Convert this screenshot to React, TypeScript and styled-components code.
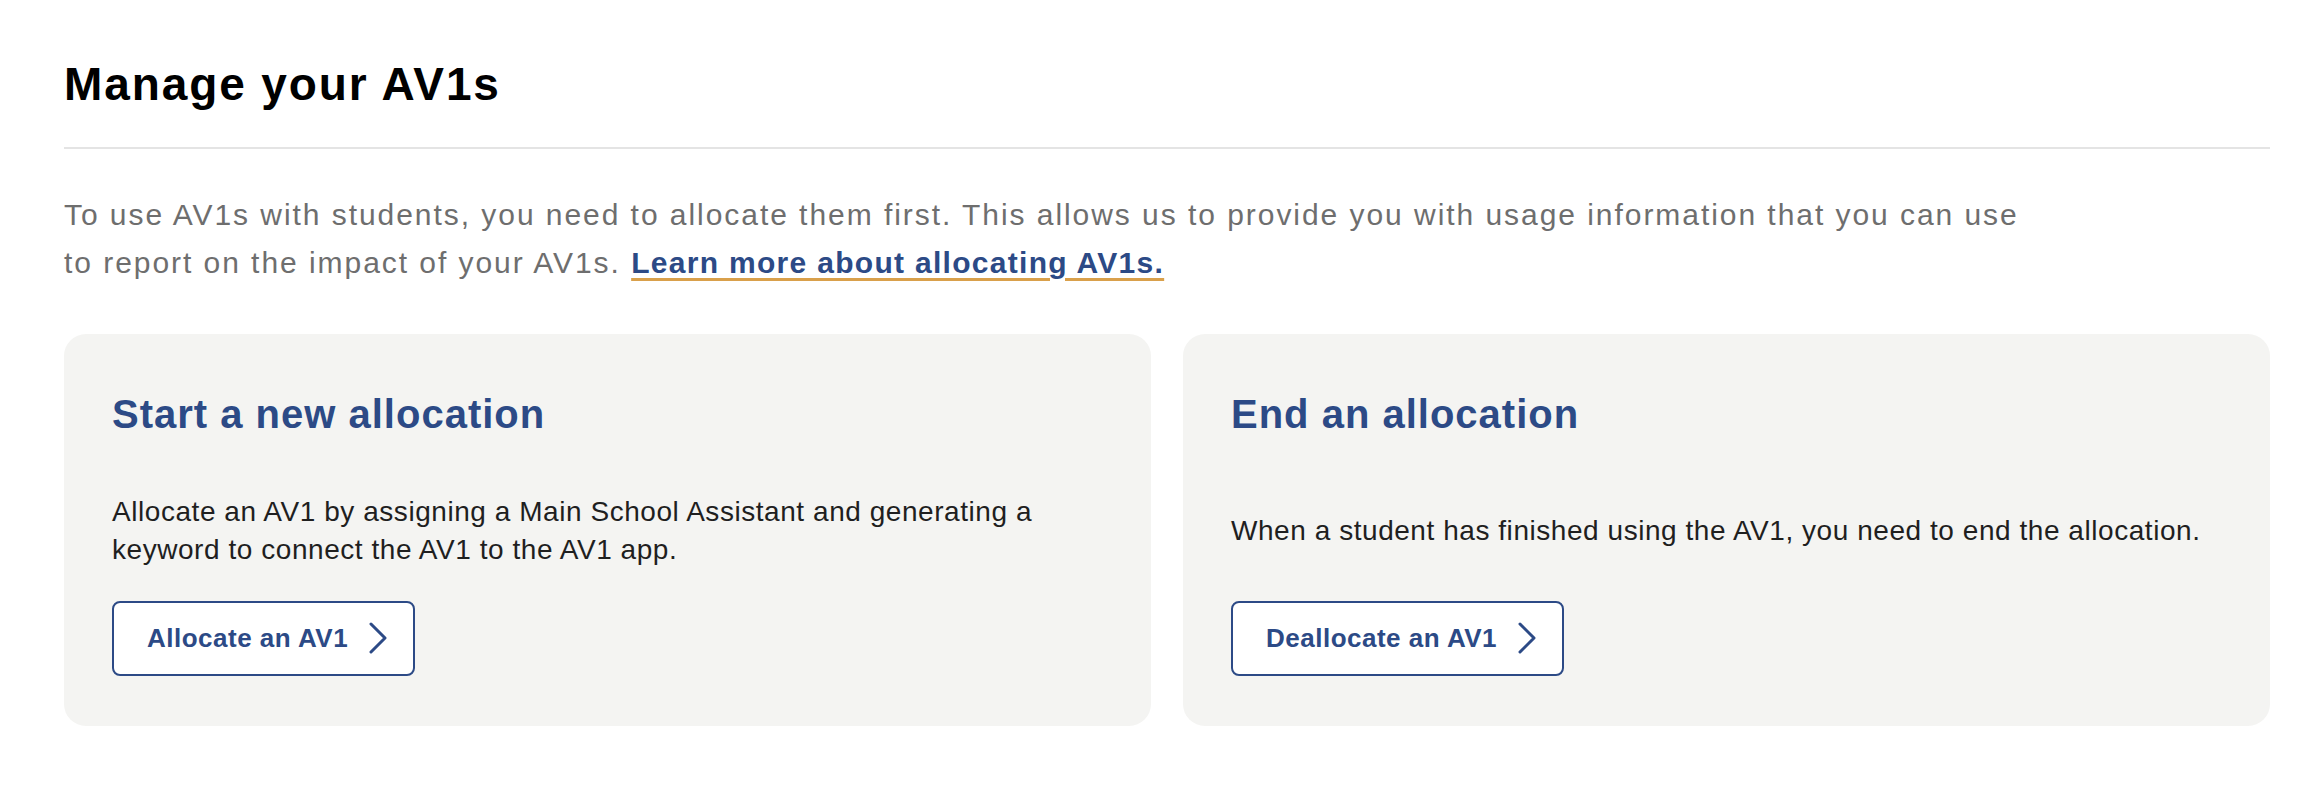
import styled, { createGlobalStyle } from 'styled-components';

const GlobalStyle = createGlobalStyle`
  * {
    box-sizing: border-box;
  }
  body {
    margin: 0;
    background: #ffffff;
    font-family: 'Liberation Sans', Arial, sans-serif;
  }
`;

const navy = '#2c4a86';

const actions = [
  {
    title: 'Start a new allocation',
    text: 'Allocate an AV1 by assigning a Main School Assistant and generating a keyword to connect the AV1 to the AV1 app.',
    button: 'Allocate an AV1',
  },
  {
    title: 'End an allocation',
    text: 'When a student has finished using the AV1, you need to end the allocation.',
    button: 'Deallocate an AV1',
  },
];

const Chevron = () => (
  <svg width="18" height="32" viewBox="0 0 18 32" fill="none">
    <polyline points="2,2 16,16 2,30" stroke={navy} strokeWidth="3" strokeLinecap="round" strokeLinejoin="round" />
  </svg>
);

const App = () => {
  return (
    <>
      <GlobalStyle />
      <Page>
        <PageTitle>Manage your AV1s</PageTitle>
        <Divider />
        <Intro>
          To use AV1s with students, you need to allocate them first. This allows us to provide you with usage
          information that you can use to report on the impact of your AV1s.{' '}
          <IntroLink href="#">Learn more about allocating AV1s.</IntroLink>
        </Intro>
        <CardGrid>
          {actions.map((a) => (
            <Card key={a.title}>
              <CardTitle>{a.title}</CardTitle>
              <CardBody>
                <p>{a.text}</p>
              </CardBody>
              <CardButton type="button">
                {a.button}
                <Chevron />
              </CardButton>
            </Card>
          ))}
        </CardGrid>
      </Page>
    </>
  );
};

const Page = styled.main`
  width: 2270px;
  padding: 58px 0 0 64px;
`;

const PageTitle = styled.h1`
  margin: 0;
  font-size: 46px;
  line-height: 1.15;
  font-weight: 700;
  letter-spacing: 1.9px;
  color: #000;
`;

const Divider = styled.hr`
  margin: 36px 0 0;
  border: none;
  height: 2px;
  background-color: #e4e4e4;
`;

const Intro = styled.p`
  margin: 42px 0 0;
  max-width: 1975px;
  font-size: 30px;
  line-height: 48px;
  letter-spacing: 1.95px;
  color: #6e6e6e;
`;

const IntroLink = styled.a`
  font-weight: 700;
  letter-spacing: 1.3px;
  color: ${navy};
  text-decoration: underline;
  text-decoration-color: #d9a04b;
  text-decoration-thickness: 3px;
  text-underline-offset: 5px;
`;

const CardGrid = styled.div`
  margin-top: 47px;
  display: grid;
  grid-template-columns: 1fr 1fr;
  gap: 32px;
`;

const Card = styled.section`
  display: grid;
  grid-template-rows: auto 1fr auto;
  justify-items: start;
  padding: 56px 48px 50px;
  border-radius: 22px;
  background-color: #f4f4f2;
`;

const CardTitle = styled.h2`
  margin: 0 0 55px;
  font-size: 40px;
  line-height: 48px;
  font-weight: 700;
  letter-spacing: 1px;
  color: ${navy};
`;

const CardBody = styled.div`
  display: flex;
  align-items: center;
  margin-bottom: 32px;

  p {
    margin: 0;
    font-size: 28px;
    line-height: 38px;
    letter-spacing: 0.55px;
    color: #1f1f1f;
  }
`;

const CardButton = styled.button`
  display: inline-flex;
  align-items: center;
  gap: 21px;
  height: 75px;
  padding: 0 26px 0 33px;
  border: 2px solid ${navy};
  border-radius: 8px;
  background: #fff;
  font-family: inherit;
  font-size: 26px;
  font-weight: 700;
  letter-spacing: 0.5px;
  color: ${navy};
  cursor: pointer;
`;

export default App;
